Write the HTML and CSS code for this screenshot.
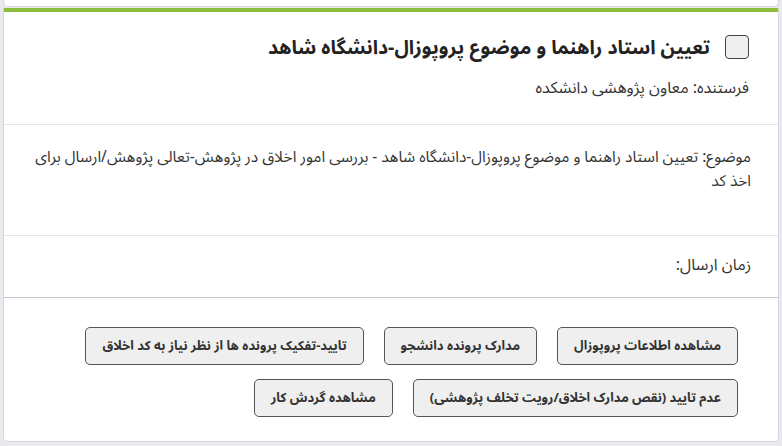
FILE: index.html
```html
<!DOCTYPE html>
<html lang="fa" dir="rtl">
<head>
  <meta charset="UTF-8" />
  <meta name="viewport" content="width=device-width, initial-scale=1.0"/>
  <title>کارتابل</title>
  <link rel="stylesheet" href="styles.css">
</head>
<body>
  <div class="card card-prev"></div>

  <div class="card letter">
    <div class="letter-head">
      <div class="title-row">
        <span class="check"></span>
        <h2>تعیین استاد راهنما و موضوع پروپوزال-دانشگاه شاهد</h2>
      </div>
      <div class="sender">فرستنده: معاون پژوهشی دانشکده</div>
    </div>

    <div class="section subject">
      موضوع: تعیین استاد راهنما و موضوع پروپوزال-دانشگاه شاهد - بررسی امور اخلاق در پژوهش-تعالی پژوهش/ارسال برای اخذ کد
    </div>

    <div class="section sent-time">زمان ارسال:</div>

    <div class="actions">
      <button>مشاهده اطلاعات پروپوزال</button>
      <button>مدارک پرونده دانشجو</button>
      <button>تایید-تفکیک پرونده ها از نظر نیاز به کد اخلاق</button>
      <button>عدم تایید (نقص مدارک اخلاق/رویت تخلف پژوهشی)</button>
      <button>مشاهده گردش کار</button>
    </div>
  </div>
</body>
</html>
```

FILE: styles.css
```css
body {
  margin: 0;
  padding: 0 3px;
  background: #e9e9ef;
  font-family: 'Noto Sans Arabic', 'DejaVu Sans', 'Noto Sans', sans-serif;
  color: #333;
  font-size: 16px;
}

.card {
  background: #fff;
  border: 1px solid #d4d4da;
  border-radius: 5px;
}

.card-prev {
  height: 6px;
  border-top: none;
  border-radius: 0 0 5px 5px;
}

.letter {
  margin-top: 1px;
  border-top: 4px solid #8dbe3b;
  border-radius: 2px 2px 5px 5px;
}

.letter-head {
  padding: 20px 29px 24px;
  border-bottom: 1px solid #e6e6ea;
}

.title-row {
  display: flex;
  align-items: center;
  gap: 15px;
  height: 30px;
}

.check {
  width: 22px;
  height: 22px;
  border: 1.5px solid #444;
  border-radius: 4px;
  background: #efefef;
  flex: none;
}

.title-row h2 {
  margin: 0;
  font-size: 19.5px;
  font-weight: bold;
  color: #222;
}

.sender {
  margin-top: 14px;
  line-height: 24px;
}

.section {
  padding: 20px 27px 42px 24px;
  line-height: 24px;
  border-bottom: 1px solid #e6e6ea;
}

.subject {
  font-size: 15.5px;
}

.sent-time {
  padding: 17px 27px 20px;
  border-bottom-color: #c9c9cf;
}

.actions {
  display: flex;
  flex-wrap: wrap;
  gap: 14px 20px;
  padding: 29px 40px 24px;
}

.actions button {
  height: 38px;
  padding: 0 16px;
  font-family: inherit;
  font-size: 13px;
  font-weight: bold;
  color: #333;
  background: #efefef;
  border: 1px solid #555;
  border-radius: 5px;
}
```
